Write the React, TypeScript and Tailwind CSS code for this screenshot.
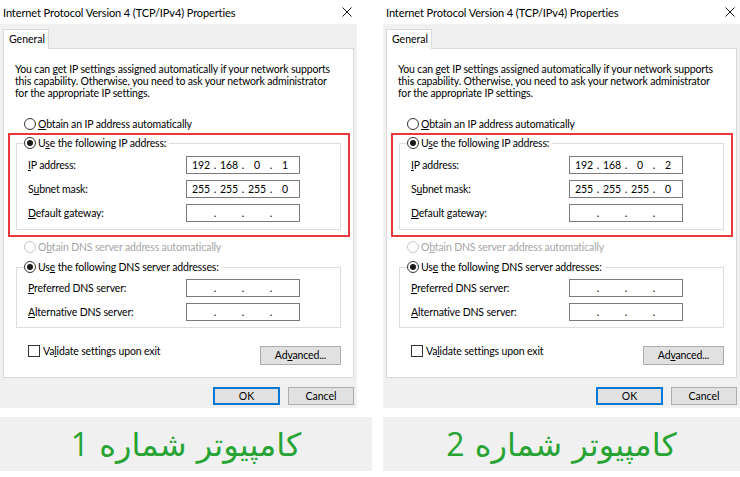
import React from "react";

type Octets = [string, string, string, string];

function Radio({ checked = false, disabled = false }: { checked?: boolean; disabled?: boolean }) {
  return (
    <span
      className={
        disabled
          ? "flex h-[12px] w-[12px] shrink-0 items-center justify-center rounded-full border border-[#c8c8c8] bg-white"
          : "flex h-[12px] w-[12px] shrink-0 items-center justify-center rounded-full border border-[#333333] bg-white"
      }
    >
      {checked && <span className="h-[6px] w-[6px] rounded-full bg-[#1a1a1a]" />}
    </span>
  );
}

function IpBox({ value }: { value: Octets }) {
  return (
    <div className="flex h-[18px] w-[114px] items-center border border-[#7a7a7a] bg-white text-[10.5px] leading-none text-black">
      {value.map((v, i) => (
        <React.Fragment key={i}>
          <span className="flex flex-1 justify-center">{v}</span>
          {i < 3 && <span className="flex w-0 justify-center">.</span>}
        </React.Fragment>
      ))}
    </div>
  );
}

function Field({ label, value }: { label: React.ReactNode; value: Octets }) {
  return (
    <div className="flex h-[18px] items-center justify-between pl-[4px] pr-[33px]">
      <span className="text-[10.5px] leading-none tracking-[-0.15px]">{label}</span>
      <IpBox value={value} />
    </div>
  );
}

function Button({ children, primary = false, className = "" }: { children: React.ReactNode; primary?: boolean; className?: string }) {
  return (
    <div
      className={
        (primary
          ? "flex items-center justify-center border-2 border-[#0078d7] bg-[#e1e1e1] "
          : "flex items-center justify-center border border-[#adadad] bg-[#e1e1e1] ") + className
      }
    >
      <span className="text-[10.5px] leading-none">{children}</span>
    </div>
  );
}

const EMPTY: Octets = ["", "", "", ""];

function TcpIpDialog({ lastOctet }: { lastOctet: string }) {
  return (
    <div className="relative flex w-[357px] flex-col text-black">
      {/* title bar */}
      <div className="flex h-[24px] items-center justify-between bg-white pl-[3px] pr-[4px]">
        <span className="whitespace-nowrap text-[11px] leading-none tracking-[-0.1px]">
          Internet Protocol Version 4 (TCP/IPv4) Properties
        </span>
        <svg width="10" height="10" viewBox="0 0 10 10" className="mr-[1px]">
          <path d="M0.5 0.5 L9.5 9.5 M9.5 0.5 L0.5 9.5" stroke="#111" strokeWidth="1" fill="none" />
        </svg>
      </div>

      {/* client area */}
      <div className="flex flex-col bg-[#f0f0f0] pb-[3px] pt-[5px]">
        <div className="ml-[3px] flex">
          <div className="relative z-10 -mb-px flex h-[20px] w-[46px] items-center border border-b-0 border-[#d9d9d9] bg-white pl-[5px]">
            <span className="text-[10.5px] leading-none">General</span>
          </div>
        </div>

        <div className="relative ml-[3px] flex h-[330px] w-[351px] flex-col border border-[#d9d9d9] bg-white pt-[14px] tracking-[-0.15px]">
          <p className="whitespace-nowrap pl-[11px] text-[10.5px] leading-[12px]">
            You can get IP settings assigned automatically if your network supports
            <br />
            this capability. Otherwise, you need to ask your network administrator
            <br />
            for the appropriate IP settings.
          </p>

          <div className="mt-[18px] flex h-[14px] items-center gap-[2px] pl-[20px]">
            <Radio />
            <span className="text-[10.5px] leading-none">
              <u>O</u>btain an IP address automatically
            </span>
          </div>

          <fieldset className="mx-[12px] mt-[5px] border border-[#dcdcdc] px-[7px] pb-[7px]">
            <legend className="bg-white pr-[3px]">
              <span className="flex h-[14px] items-center gap-[2px]">
                <Radio checked />
                <span className="text-[10.5px] leading-none">
                  U<u>s</u>e the following IP address:
                </span>
              </span>
            </legend>
            <div className="mt-[6px] flex flex-col gap-[6px]">
              <Field label={<><u>I</u>P address:</>} value={["192", "168", "0", lastOctet]} />
              <Field label={<>S<u>u</u>bnet mask:</>} value={["255", "255", "255", "0"]} />
              <Field label={<><u>D</u>efault gateway:</>} value={EMPTY} />
            </div>
          </fieldset>

          <div className="mt-[10px] flex h-[14px] items-center gap-[2px] pl-[20px] text-[#a6a6a6]">
            <Radio disabled />
            <span className="text-[10.5px] leading-none">
              O<u>b</u>tain DNS server address automatically
            </span>
          </div>

          <fieldset className="mx-[12px] mt-[6px] border border-[#dcdcdc] px-[7px] pb-[6px]">
            <legend className="bg-white pr-[3px]">
              <span className="flex h-[14px] items-center gap-[2px]">
                <Radio checked />
                <span className="text-[10.5px] leading-none">
                  Us<u>e</u> the following DNS server addresses:
                </span>
              </span>
            </legend>
            <div className="mt-[5px] flex flex-col gap-[6px]">
              <Field label={<><u>P</u>referred DNS server:</>} value={EMPTY} />
              <Field label={<><u>A</u>lternative DNS server:</>} value={EMPTY} />
            </div>
          </fieldset>

          <div className="mt-[17px] flex items-start justify-between pl-[24px] pr-[12px]">
            <div className="flex items-center gap-[3px]">
              <span className="h-[12px] w-[12px] border border-[#333333] bg-white" />
              <span className="text-[10.5px] leading-none">
                Va<u>l</u>idate settings upon exit
              </span>
            </div>
            <Button className="mt-[1px] h-[19px] w-[81px]">
              Ad<u>v</u>anced...
            </Button>
          </div>

          {/* highlight around the static address group */}
          <div className="pointer-events-none absolute left-[4px] top-[84px] h-[104px] w-[342px] border-2 border-[#e8383d]" />
        </div>

        <div className="mt-[9px] flex justify-end gap-[8px] pr-[3px]">
          <Button primary className="h-[18px] w-[67px]">
            OK
          </Button>
          <Button className="h-[18px] w-[66px]">Cancel</Button>
        </div>
      </div>
    </div>
  );
}

function Caption({ word, num, className = "" }: { word: string; num: string; className?: string }) {
  return (
    <div className={"flex h-[54px] items-center justify-center bg-[#f0f0f0] " + className}>
      <span dir="rtl" className="font-[family-name:DejaVu_Sans,sans-serif] text-[32px] leading-none text-[#27a333]">
        {word} <span className="font-[family-name:Open_Sans,sans-serif]">{num}</span>
      </span>
    </div>
  );
}

export default function App() {
  return (
    <div className="h-[477px] w-[740px] overflow-hidden bg-white font-[family-name:Lato,sans-serif]">
      <div className="flex gap-[26px]">
        <TcpIpDialog lastOctet="1" />
        <TcpIpDialog lastOctet="2" />
      </div>
      <div className="mt-[9px] flex gap-[11px]">
        <Caption word="کامپیوتر شماره" num="1" className="w-[372px]" />
        <Caption word="کامپیوتر شماره" num="2" className="w-[357px]" />
      </div>
    </div>
  );
}
